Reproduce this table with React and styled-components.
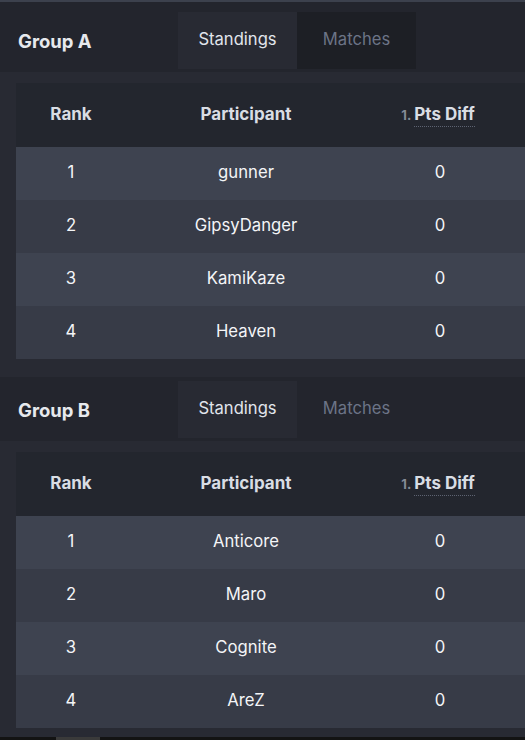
import React from 'react';
import styled, { createGlobalStyle } from 'styled-components';

const Global = createGlobalStyle`
  html, body { margin: 0; padding: 0; overflow: hidden; }
  body {
    background: #272932;
    width: 525px;
    height: 740px;
    font-family: Inter, "Noto Sans", sans-serif;
    -webkit-font-smoothing: antialiased;
  }
`;

const Page = styled.div`
  display: flex;
  flex-direction: column;
  height: 740px;
  overflow: hidden;
`;

const TopStrip = styled.div`
  height: 2px;
  background: #3c414d;
  flex: none;
`;

const Spacer = styled.div`
  height: 6px;
  background: #23252d;
  flex: none;
`;

const Section = styled.section`
  flex: none;
  display: flex;
  flex-direction: column;
`;

const Header = styled.div`
  display: flex;
  align-items: stretch;
  height: 64px;
  box-sizing: border-box;
  padding: 4px 0 3px 0;
  background: #23252d;
`;

const Title = styled.h2`
  margin: 0;
  flex: 0 0 178px;
  display: flex;
  align-items: center;
  padding-left: 18px;
  box-sizing: border-box;
  font-size: 18.5px;
  font-weight: 700;
  color: #e7e9ed;
`;

const Tabs = styled.div`
  display: flex;
`;

const Tab = styled.div`
  width: 119px;
  display: flex;
  align-items: center;
  justify-content: center;
  padding-bottom: 4px;
  box-sizing: border-box;
  font-size: 16.6px;
  color: ${p => (p.$active ? '#e1e5ec' : '#6c7487')};
  background: ${p => (p.$active ? '#282a33' : p.$dim ? '#1d1f25' : 'transparent')};
`;

const Body = styled.div`
  background: #282a33;
  padding: 11px 0 18px 16px;
`;

const Table = styled.div`
  display: flex;
  flex-direction: column;
`;

const Row = styled.div`
  display: grid;
  grid-template-columns: 110px 240px 148px 1fr;
  align-items: center;
  height: ${p => (p.$head ? '64px' : '53px')};
  background: ${p => (p.$head ? '#23262e' : p.$odd ? '#3e4350' : '#373b47')};
`;

const HeadCell = styled.div`
  text-align: center;
  font-size: 17px;
  font-weight: 700;
  color: #d9dde4;
  padding-bottom: 2px;
`;

const Cell = styled.div`
  text-align: center;
  font-size: 16.7px;
  color: #f4f5f7;
  padding-bottom: 4px;
`;

const Order = styled.span`
  font-size: 13px;
  font-weight: 700;
  color: #858b97;
  margin-right: 3px;
  margin-left: -4px;
`;

const Abbr = styled.abbr`
  text-decoration: none;
  border-bottom: 1px dotted #5d6372;
  padding-bottom: 2px;
`;

const ScrollBar = styled.div`
  position: fixed;
  left: 0;
  right: 0;
  bottom: 0;
  height: 3px;
  background: #131313;
`;

const Thumb = styled.div`
  position: absolute;
  left: 56px;
  width: 44px;
  top: 0;
  bottom: 0;
  background: #3a3a3a;
`;

const groups = [
  { name: 'Group A', dimMatches: true, players: ['gunner', 'GipsyDanger', 'KamiKaze', 'Heaven'] },
  { name: 'Group B', dimMatches: false, players: ['Anticore', 'Maro', 'Cognite', 'AreZ'] },
];

function Group({ group }) {
  return (
    <Section>
      <Header>
        <Title>{group.name}</Title>
        <Tabs>
          <Tab $active>Standings</Tab>
          <Tab $dim={group.dimMatches}>Matches</Tab>
        </Tabs>
      </Header>
      <Body>
        <Table>
          <Row $head>
            <HeadCell>Rank</HeadCell>
            <HeadCell>Participant</HeadCell>
            <HeadCell>
              <Order>1.</Order>
              <Abbr title="Points difference">Pts Diff</Abbr>
            </HeadCell>
            <div />
          </Row>
          {group.players.map((p, i) => (
            <Row key={p} $odd={i % 2 === 0}>
              <Cell>{i + 1}</Cell>
              <Cell>{p}</Cell>
              <Cell>0</Cell>
              <div />
            </Row>
          ))}
        </Table>
      </Body>
    </Section>
  );
}

export default function App() {
  return (
    <>
      <Global />
      <Page>
        <TopStrip />
        <Spacer />
        {groups.map(g => (
          <Group key={g.name} group={g} />
        ))}
      </Page>
      <ScrollBar>
        <Thumb />
      </ScrollBar>
    </>
  );
}
